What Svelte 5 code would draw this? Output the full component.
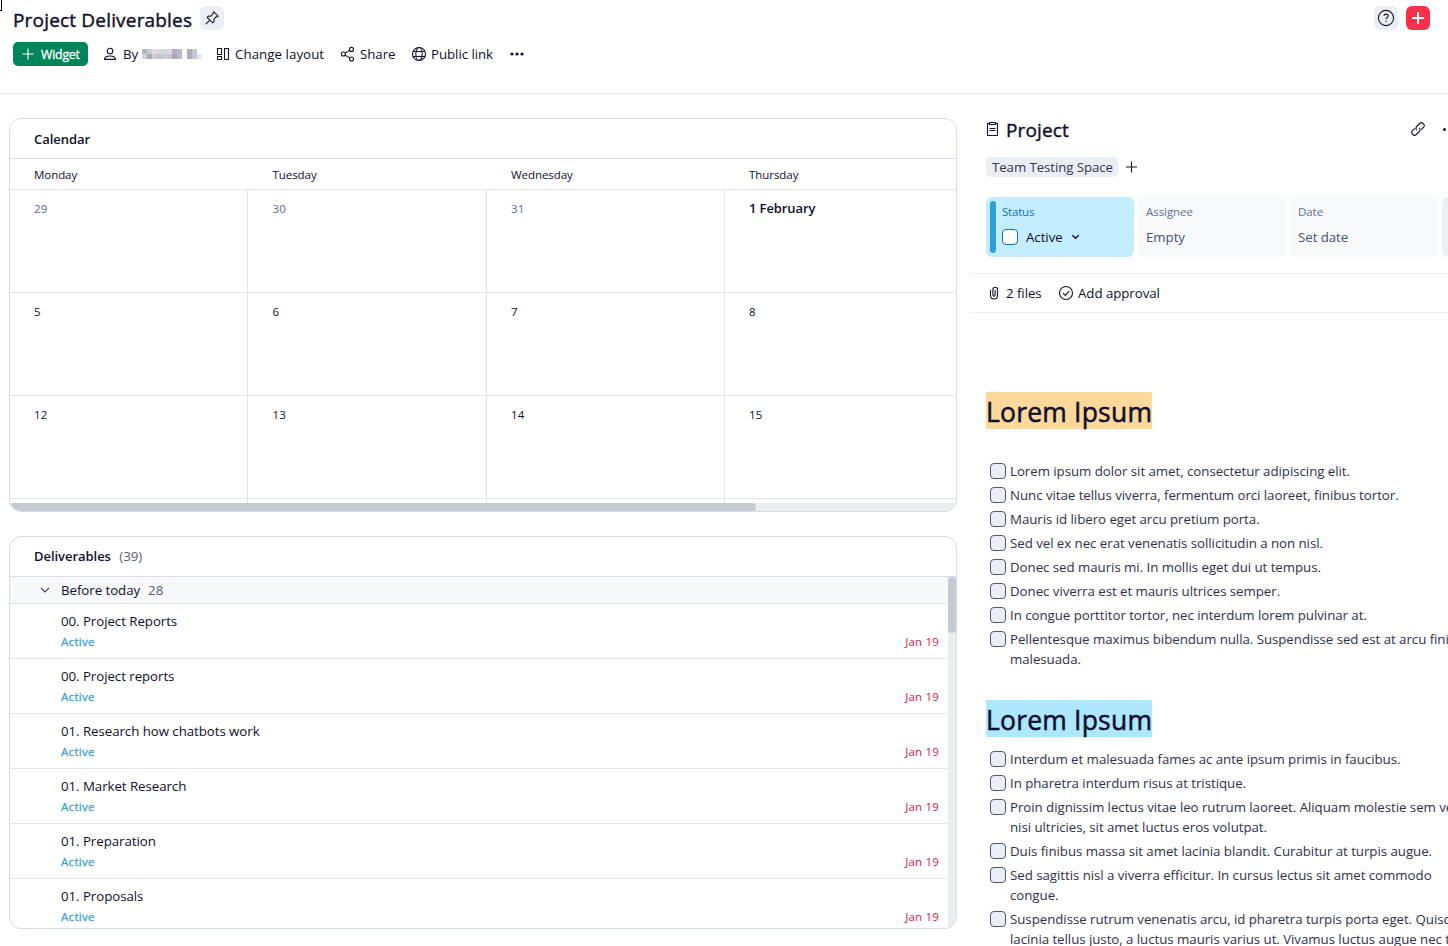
<script>
  const weekdays = ['Monday', 'Tuesday', 'Wednesday', 'Thursday'];

  const days = [
    { label: '29', muted: true },
    { label: '30', muted: true },
    { label: '31', muted: true },
    { label: '1 February', first: true },
    { label: '5' },
    { label: '6' },
    { label: '7' },
    { label: '8' },
    { label: '12' },
    { label: '13' },
    { label: '14' },
    { label: '15' },
    { label: '' },
    { label: '' },
    { label: '' },
    { label: '' }
  ];

  const deliverables = [
    '00. Project Reports',
    '00. Project reports',
    '01. Research how chatbots work',
    '01. Market Research',
    '01. Preparation',
    '01. Proposals'
  ].map((name) => ({ name, status: 'Active', due: 'Jan 19' }));

  const sections = [
    {
      title: 'Lorem Ipsum',
      color: 'orange',
      items: [
        ['Lorem ipsum dolor sit amet, consectetur adipiscing elit.'],
        ['Nunc vitae tellus viverra, fermentum orci laoreet, finibus tortor.'],
        ['Mauris id libero eget arcu pretium porta.'],
        ['Sed vel ex nec erat venenatis sollicitudin a non nisl.'],
        ['Donec sed mauris mi. In mollis eget dui ut tempus.'],
        ['Donec viverra est et mauris ultrices semper.'],
        ['In congue porttitor tortor, nec interdum lorem pulvinar at.'],
        ['Pellentesque maximus bibendum nulla. Suspendisse sed est at arcu finibus', 'malesuada.']
      ]
    },
    {
      title: 'Lorem Ipsum',
      color: 'blue',
      items: [
        ['Interdum et malesuada fames ac ante ipsum primis in faucibus.'],
        ['In pharetra interdum risus at tristique.'],
        [
          'Proin dignissim lectus vitae leo rutrum laoreet. Aliquam molestie sem vel',
          'nisi ultricies, sit amet luctus eros volutpat.'
        ],
        ['Duis finibus massa sit amet lacinia blandit. Curabitur at turpis augue.'],
        ['Sed sagittis nisl a viverra efficitur. In cursus lectus sit amet commodo', 'congue.'],
        [
          'Suspendisse rutrum venenatis arcu, id pharetra turpis porta eget. Quisque',
          'lacinia tellus justo, a luctus mauris varius ut. Vivamus luctus augue nec tellus'
        ]
      ]
    }
  ];

  // redacted owner name, two rows of blocks
  const mosaic = [
    ['#b4b7c0', '#cfcdd6', '#e2dbe4', '#d8d9de', '#cfd6d8', '#d6dcdd', '#b9a7c8', '#b5bcc8', '#ffffff', '#a9afba', '#c5c9d1', '#ffffff'],
    ['#cbd5da', '#a9adae', '#d8c9d0', '#c2c4cc', '#c8cbd0', '#c3c7c9', '#b2a2b8', '#b4bec9', '#ffffff', '#aab1bb', '#c3c8ce', '#e9e6f1']
  ];
</script>

<div class="page">
  <i class="corner"></i>
  <header class="topbar">
    <div class="title-row">
      <h1>Project Deliverables</h1>
      <button class="square pin" aria-label="Pin">
        <svg width="16" height="16" viewBox="0 0 16 16">
          <path d="M9.8 1.9l4.3 4.3-1.1.8-.9-.1-2.2 2.3.1 2.4-1.3 1.2-5.5-5.4 1.3-1.3 2.3.1 2.3-2.3-.1-.9zM5.9 10.1l-4.1 4.1" />
        </svg>
      </button>
      <button class="square help" aria-label="Help">
        <svg width="18" height="18" viewBox="0 0 18 18">
          <circle cx="9" cy="9" r="7.6" />
          <path d="M7 7.1c0-2.7 4.1-2.6 4.1-.1 0 1.5-2 1.6-2 3.3M9.1 11.7v1.3" />
        </svg>
      </button>
      <button class="square add" aria-label="Create">
        <svg width="14" height="14" viewBox="0 0 14 14"><path d="M7 1v12M1 7h12" /></svg>
      </button>
    </div>
    <div class="tools">
      <button class="widget">
        <svg width="12" height="12" viewBox="0 0 12 12"><path d="M6 .5v11M.5 6h11" /></svg>
        <span>Widget</span>
      </button>
      <span class="tool owner">
        <svg width="14" height="14" viewBox="0 0 14 14">
          <circle cx="7" cy="4" r="2.8" />
          <path d="M1.5 12.4c0-4.6 11-4.6 11 0z" />
        </svg>
        By
        <svg class="mosaic" width="60" height="10" viewBox="0 0 60 10" shape-rendering="crispEdges">
          {#each mosaic as row, y}
            {#each row as fill, x}
              <rect x={x * 5} y={y * 5} width="5" height="5" {fill} />
            {/each}
          {/each}
        </svg>
      </span>
      <span class="tool layout">
        <svg width="14" height="14" viewBox="0 0 14 14">
          <path d="M1.5 1.5h4v6h-4zM1.5 9.5h4v3h-4zM8.5 1.5h4v11h-4z" />
        </svg>
        Change layout
      </span>
      <span class="tool share">
        <svg width="15" height="16" viewBox="0 0 15 16">
          <circle cx="3.4" cy="8" r="2" />
          <circle cx="11.5" cy="3.4" r="2" />
          <circle cx="11.5" cy="13" r="2" />
          <path d="M5.2 7l4.4-2.6M5.2 9.1l4.5 2.8" />
        </svg>
        Share
      </span>
      <span class="tool link">
        <svg width="16" height="16" viewBox="0 0 16 16">
          <circle cx="8" cy="8" r="6.5" />
          <ellipse cx="8" cy="8" rx="3.2" ry="6.5" />
          <path d="M2.2 5.5h11.6M2.2 10.5h11.6" />
        </svg>
        Public link
      </span>
      <svg class="more" width="14" height="4" viewBox="0 0 14 4">
        <circle cx="2" cy="2" r="1.6" /><circle cx="7" cy="2" r="1.6" /><circle cx="12" cy="2" r="1.6" />
      </svg>
    </div>
  </header>

  <div class="columns">
    <main>
      <section class="panel">
        <h2>Calendar</h2>
        <div class="week names">
          {#each weekdays as day (day)}
            <span>{day}</span>
          {/each}
        </div>
        <div class="week grid">
          {#each days as day}
            <div class="day" class:muted={day.muted} class:first={day.first}>{day.label}</div>
          {/each}
        </div>
        <div class="hscroll"><div class="thumb"></div></div>
      </section>

      <section class="panel">
        <h2>Deliverables <small>(39)</small></h2>
        <div class="list-wrap">
          <div class="list">
            <div class="group">
              <svg width="10" height="6" viewBox="0 0 10 6"><path d="M1 1l4 4 4-4" /></svg>
              Before today <small>28</small>
            </div>
            {#each deliverables as item}
              <div class="item">
                <div class="name">{item.name}</div>
                <div class="meta">
                  <span class="status">{item.status}</span>
                  <span class="due">{item.due}</span>
                </div>
              </div>
            {/each}
          </div>
          <div class="vscroll"><div class="thumb"></div></div>
        </div>
      </section>
    </main>

    <aside>
      <div class="project-head">
        <svg width="14" height="16" viewBox="0 0 14 16">
          <path d="M4.5 2.5h-2v12h10v-12h-2M4.5 1.5h6v2h-6zM4.5 7.5h6M4.5 9.500h6" />
        </svg>
        <h3>Project</h3>
        <svg class="chain" width="16" height="16" viewBox="0 0 16 16">
          <path d="M6.8 9.2C5.6 8 5.7 6.5 6.7 5.5L9.7 2.5C12 .2 15.8 4 13.5 6.3L11.2 8.6M9.2 6.8C10.4 8 10.3 9.5 9.3 10.5L6.300 13.5C4 15.8 .2 12 2.5 9.7L4.8 7.4" />
        </svg>
        <i class="dot"></i>
      </div>
      <div class="spaces">
        <span class="space">Team Testing Space</span>
        <svg width="12" height="12" viewBox="0 0 12 12"><path d="M5.500 .5v11M0 6h11" /></svg>
      </div>
      <div class="fields">
        <div class="field active">
          <i class="stripe"></i>
          <div>
            <div class="caption">Status</div>
            <div class="value">
              <i class="check"></i>
              Active
              <svg width="10" height="6" viewBox="0 0 10 6"><path d="M1.5 1L5 4.5 8.5 1" /></svg>
            </div>
          </div>
        </div>
        <div class="field">
          <div class="caption">Assignee</div>
          <div class="value">Empty</div>
        </div>
        <div class="field">
          <div class="caption">Date</div>
          <div class="value">Set date</div>
        </div>
        <div class="field extra"></div>
      </div>
      <div class="attachments">
        <svg width="10" height="14" viewBox="0 0 10 14">
          <path d="M1.500 4v5.500a3.500 3.500 0 0 0 7 0V3.500a2.300 2.300 0 0 0-4.600 0V9a1.100 1.100 0 0 0 2.200 0V4" />
        </svg>
        <span class="files">2 files</span>
        <svg width="16" height="16" viewBox="0 0 16 16">
          <circle cx="8" cy="8" r="6.5" />
          <path d="M5 8.2l2.2 2.2 4-4.3" />
        </svg>
        <span>Add approval</span>
      </div>
      <article>
        {#each sections as section}
          <h4 class={section.color}><mark>{section.title}</mark></h4>
          <ul>
            {#each section.items as lines}
              <li>
                <i class="box"></i>
                <div>
                  {#each lines as line}
                    <div>{line}</div>
                  {/each}
                </div>
              </li>
            {/each}
          </ul>
        {/each}
      </article>
    </aside>
  </div>
</div>

<style>
  :global(body) {
    background: #fff;
    overflow: hidden;
  }

  .page {
    position: relative;
    width: 1448px;
    height: 946px;
    overflow: hidden;
    color: #0f0f2d;
    font-family: 'Open Sans', 'Noto Sans', sans-serif;
    font-size: 13.3px;
    letter-spacing: -0.06px;
    line-height: 20px;
    white-space: nowrap;
  }
  .page * {
    box-sizing: border-box;
  }
  .corner {
    position: absolute;
    left: 0;
    top: 0;
    width: 2px;
    height: 11px;
    border: solid #000;
    border-width: 0 1px 1px 0;
  }

  h1,
  h2,
  h3,
  h4,
  ul {
    margin: 0;
    padding: 0;
  }
  /* regular weight thickened a little, between 400 and 600 */
  h1,
  h3,
  h4 {
    font-weight: 400;
    -webkit-text-stroke: 0.4px currentColor;
  }
  svg {
    flex: none;
    fill: none;
    stroke: #14142f;
    stroke-width: 1.1;
  }
  button {
    border: 0;
    padding: 0;
    font: inherit;
    letter-spacing: inherit;
  }

  .topbar {
    height: 94px;
    border-bottom: 1px solid #e1e3ee;
    padding: 6px 18px 0 13px;
  }
  .title-row {
    display: flex;
    height: 24px;
  }
  h1 {
    width: 179px;
    font-size: 19px;
    letter-spacing: 0.18px;
    line-height: 28px;
  }
  .square {
    display: flex;
    align-items: center;
    justify-content: center;
    width: 24px;
    height: 24px;
    border-radius: 6px;
    background: #ebeff5;
  }
  .pin {
    margin-left: 8px;
  }
  .help {
    margin-left: auto;
  }
  .add {
    margin-left: 8px;
    background: #fc3049;
  }
  .add svg {
    stroke: #fff;
    stroke-width: 2;
  }

  .tools {
    display: flex;
    align-items: center;
    height: 24px;
    margin-top: 12px;
  }
  .widget {
    display: flex;
    align-items: center;
    gap: 7px;
    width: 75px;
    height: 24px;
    padding-left: 9px;
    border-radius: 5px;
    background: #00855b;
    color: #fff;
    font-size: 12.3px;
    letter-spacing: -0.2px;
  }
  .widget span {
    padding-top: 1px;
    -webkit-text-stroke: 0.3px #fff;
  }
  .widget svg {
    stroke: #fff;
  }
  .tool {
    display: flex;
    align-items: center;
  }
  .owner {
    width: 113px;
    padding-left: 15px;
    gap: 6px;
  }
  .mosaic {
    margin-left: -2px;
    stroke: none;
  }
  .layout {
    width: 124px;
    padding-left: 15px;
    gap: 5px;
    letter-spacing: 0.05px;
  }
  .share {
    width: 71px;
    padding-left: 15px;
    gap: 5px;
  }
  .link {
    width: 99px;
    padding-left: 15px;
    gap: 4px;
  }
  .more {
    margin-left: 15px;
    fill: #0f0f2d;
    stroke: none;
  }

  .columns {
    display: flex;
    height: 852px;
  }
  main {
    display: flex;
    flex-direction: column;
    gap: 24px;
    width: 970px;
    padding: 24px 13px 17px 9px;
  }
  .panel {
    display: flex;
    flex-direction: column;
    height: 394px;
    border: 1px solid #d6dce8;
    border-radius: 12px;
    overflow: hidden;
  }
  .panel + .panel {
    height: 393px;
  }
  h2 {
    height: 40px;
    flex: none;
    padding-left: 24px;
    border-bottom: 1px solid #d6dce8;
    font-size: 13px;
    font-weight: 600;
    letter-spacing: -0.04px;
    line-height: 40px;
  }
  .panel + .panel h2 {
    line-height: 38px;
  }
  small {
    margin-left: 5px;
    color: #546078;
    font-size: 13.3px;
    font-weight: 400;
  }
  .week {
    display: grid;
    grid-template-columns: 238px 239px 238px 239px;
    font-size: 11.5px;
  }
  .names {
    height: 31px;
    flex: none;
    border-bottom: 1px solid #e1e3ee;
    line-height: 31px;
  }
  .names span {
    padding-left: 24px;
  }
  .grid {
    height: 313px;
    grid-auto-rows: 103px;
    overflow: hidden;
  }
  .day {
    padding: 10px 0 0 24px;
    border: solid #e1e3ee;
    border-width: 0 1px 1px 0;
    letter-spacing: 0.1px;
    line-height: 17px;
  }
  .day:nth-child(4n + 2),
  .names span:nth-child(2) {
    padding-left: 24.5px;
  }
  .muted {
    color: #546e8f;
  }
  .first {
    font-size: 13px;
    font-weight: 600;
    letter-spacing: -0.1px;
  }
  .hscroll {
    height: 8px;
    flex: none;
    background: #ebedef;
  }
  .hscroll .thumb {
    width: 746px;
    height: 8px;
    border-radius: 4px;
    background: #c6cbd2;
  }

  .list-wrap {
    display: flex;
    flex: 1;
    min-height: 0;
  }
  .list {
    flex: 1;
    overflow: hidden;
  }
  .group {
    display: flex;
    align-items: center;
    height: 27px;
    padding-left: 30px;
    border-bottom: 1px solid #e1e6f0;
    background: #f7f8fa;
  }
  .group svg {
    margin-right: 11px;
    stroke: #45455c;
  }
  .group small {
    margin-left: 8px;
  }
  .item {
    height: 55px;
    padding: 7px 9px 0 51px;
    border-bottom: 1px solid #e1e6f0;
  }
  .meta {
    display: flex;
    justify-content: space-between;
    font-size: 11.5px;
    line-height: 21px;
  }
  .status {
    color: #3d9fde;
    letter-spacing: 0.3px;
    -webkit-text-stroke: 0.3px currentColor;
  }
  .due {
    color: #d9214e;
    letter-spacing: 0.18px;
  }
  .vscroll {
    width: 8px;
    background: #ebedef;
  }
  .vscroll .thumb {
    height: 56px;
    border-radius: 4px;
    background: #c6cbd2;
  }

  aside {
    width: 478px;
    overflow: hidden;
  }
  .project-head {
    display: flex;
    align-items: center;
    height: 30px;
    margin-top: 20px;
    padding-left: 15px;
  }
  h3 {
    margin-left: 7px;
    font-size: 19px;
    letter-spacing: 0.15px;
    line-height: 30px;
    padding-top: 1px;
  }
  .chain {
    margin-left: auto;
  }
  .dot {
    width: 3px;
    height: 3px;
    margin: 0 2px 0 17px;
    border-radius: 50%;
    background: #0f0f2d;
  }
  .spaces {
    display: flex;
    align-items: center;
    gap: 8px;
    margin-top: 13px;
    padding-left: 16px;
  }
  .space {
    width: 132px;
    padding-left: 6px;
    border-radius: 4px;
    background: #ebeff5;
    color: #35354f;
    letter-spacing: -0.1px;
  }
  .fields {
    display: flex;
    gap: 4px;
    margin-top: 20px;
    padding-left: 16px;
  }
  .field {
    flex: none;
    width: 148px;
    height: 60px;
    padding: 4px 8px;
    border-radius: 6px;
    background: #f7f9fb;
  }
  .caption {
    color: #5b7295;
    font-size: 11.5px;
    line-height: 22px;
  }
  .value {
    display: flex;
    align-items: center;
    margin-top: 4px;
    color: #45536d;
  }
  .active {
    display: flex;
    gap: 6px;
    padding-left: 4px;
    background: #c2eeff;
  }
  .active .caption {
    color: #1272b5;
    letter-spacing: -0.2px;
  }
  .active .value {
    color: #0f0f2d;
  }
  .active svg {
    margin-left: 8px;
    stroke-width: 1.6;
    width: 9px;
  }
  .stripe {
    width: 6px;
    height: 52px;
    border-radius: 3px;
    background: #2e9edc;
  }
  .check {
    width: 16px;
    height: 16px;
    margin-right: 8px;
    border: 1px solid #0d74bd;
    border-radius: 4px;
    background: #fff;
  }
  .extra {
    background: #ebeff5;
  }
  .attachments {
    display: flex;
    align-items: center;
    height: 40px;
    margin-top: 16px;
    padding-left: 19px;
    border: solid #edeff2;
    border-width: 1px 0;
  }
  .attachments span {
    margin-left: 4px;
  }
  .attachments .files {
    width: 36px;
    margin: 0 16px 0 7px;
  }

  article {
    padding: 79px 0 0 16px;
    color: #30304b;
    letter-spacing: -0.05px;
  }
  h4 {
    height: 37px;
    color: #0f0f2d;
    font-size: 26.5px;
    letter-spacing: 0.2px;
    line-height: 41px;
    -webkit-text-stroke-width: 0.5px;
  }
  mark {
    display: block;
    width: 166px;
    height: 37px;
    background: #ffd89c;
    color: inherit;
  }
  .blue {
    margin-top: 31px;
  }
  .blue mark {
    background: #ace8ff;
  }
  ul {
    display: flex;
    flex-direction: column;
    gap: 4px;
    margin-top: 32px;
    list-style: none;
  }
  .blue + ul {
    margin-top: 12px;
  }
  li {
    display: flex;
    gap: 4px;
    padding-left: 4px;
  }
  .box {
    flex: none;
    width: 16px;
    height: 16px;
    margin-top: 2px;
    border: 1px solid #465a7e;
    border-radius: 4px;
    background: #ebeff5;
  }
</style>
